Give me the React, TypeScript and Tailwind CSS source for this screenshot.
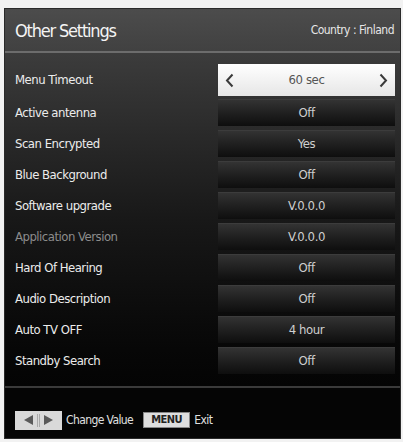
const FONT = "font-['Liberation_Sans_Narrow','DejaVu_Sans_Condensed','Liberation_Sans',sans-serif] [font-stretch:condensed]";

type Row = { label: string; value: string; dim?: boolean; active?: boolean };

const ROWS: Row[] = [
  { label: 'Menu Timeout', value: '60 sec', active: true },
  { label: 'Active antenna', value: 'Off' },
  { label: 'Scan Encrypted', value: 'Yes' },
  { label: 'Blue Background', value: 'Off' },
  { label: 'Software upgrade', value: 'V.0.0.0' },
  { label: 'Application Version', value: 'V.0.0.0', dim: true },
  { label: 'Hard Of Hearing', value: 'Off' },
  { label: 'Audio Description', value: 'Off' },
  { label: 'Auto TV OFF', value: '4 hour' },
  { label: 'Standby Search', value: 'Off' },
];

const Chevron = ({ dir }: { dir: 'left' | 'right' }) => (
  <svg width="9" height="15" viewBox="0 0 9 15" className="shrink-0">
    <path
      d={dir === 'left' ? 'M7.5 1.5 L2 7.5 L7.5 13.5' : 'M1.5 1.5 L7 7.5 L1.5 13.5'}
      fill="none"
      stroke="#3a3a3a"
      strokeWidth="2"
    />
  </svg>
);

const ValueBox = ({ row }: { row: Row }) => {
  if (row.active) {
    return (
      <div className="flex h-[32px] w-[177px] items-center justify-between bg-gradient-to-b from-[#ffffff] to-[#e6e6e6] px-[7px]">
        <Chevron dir="left" />
        <span className="text-[13px] tracking-[-0.4px] text-[#555]">{row.value}</span>
        <Chevron dir="right" />
      </div>
    );
  }
  return (
    <div className="flex h-[27px] w-[177px] items-center justify-center border-t border-[#3c3c3c] bg-gradient-to-b from-[#333333] to-[#0e0e0e]">
      <span className="text-[13px] tracking-[-0.4px] text-[#cfcfcf]">{row.value}</span>
    </div>
  );
};

const ArrowKeys = () => (
  <div className="flex h-[19px] w-[47px] items-center justify-center gap-[3px] bg-[#d9d9d9]">
    <svg width="12" height="12" viewBox="0 0 12 12">
      <path d="M11 1 L2 6 L11 11 Z" fill="#5a5a5a" />
    </svg>
    <div className="h-[13px] w-[3px] border-x border-[#aaa]" />
    <svg width="12" height="12" viewBox="0 0 12 12">
      <path d="M1 1 L10 6 L1 11 Z" fill="#5a5a5a" />
    </svg>
  </div>
);

export default function App() {
  return (
    <div className={`h-[442px] w-[403px] bg-[#f2f2f2] pb-[3px] pl-[4px] pr-[2px] pt-[8px] ${FONT}`}>
      <div className="flex h-full flex-col overflow-hidden border border-[#2a2a2a] bg-[#050505]">
        <div className="flex h-[42px] items-center justify-between bg-gradient-to-b from-[#4c4c4c] to-[#414141] pl-[10px] pr-[6px]">
          <span className="text-[18px] tracking-[-1.2px] text-[#f4f4f4]">Other Settings</span>
          <span className="text-[12px] tracking-[-0.5px] text-[#e6e6e6]">Country : Finland</span>
        </div>
        <div className="h-[2px] bg-[#6c6c6c]" />
        <div className="flex flex-col gap-[4px] bg-gradient-to-b from-[#3c3c3c] via-[#181818] to-[#040404] pb-[12px] pt-[11px]">
          {ROWS.map((row) => (
            <div key={row.label} className={`flex items-center pr-[5px] ${row.active ? '-mb-[1px]' : ''}`}>
              <span
                className={`flex-1 pl-[10px] text-[13px] tracking-[-0.5px] ${row.dim ? 'text-[#8c8c8c]' : 'text-[#ececec]'}`}
              >
                {row.label}
              </span>
              <ValueBox row={row} />
            </div>
          ))}
        </div>
        <div className="h-[2px] bg-[#3a3a3a]" />
        <div className="flex flex-1 items-center gap-[4px] pl-[10px] pt-[14px]">
          <ArrowKeys />
          <span className="text-[12px] tracking-[-0.6px] text-[#e0e0e0]">Change Value</span>
          <div className="ml-[6px] flex h-[16px] w-[47px] items-center justify-center border border-[#888] bg-[#dedede]">
            <span className="text-[11px] font-bold tracking-[-0.5px] text-[#222]">MENU</span>
          </div>
          <span className="text-[12px] tracking-[-0.5px] text-[#e0e0e0]">Exit</span>
        </div>
      </div>
    </div>
  );
}
